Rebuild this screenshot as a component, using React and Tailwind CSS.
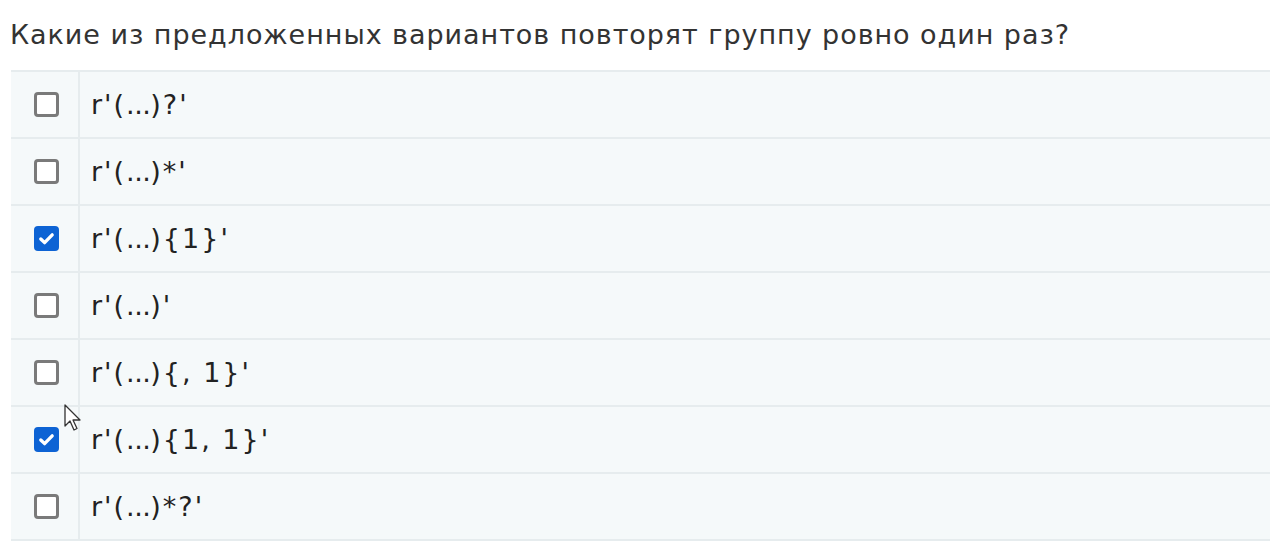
const options = [
  { label: "r'(...)?'", checked: false },
  { label: "r'(...)*'", checked: false },
  { label: "r'(...){1}'", checked: true },
  { label: "r'(...)'", checked: false },
  { label: "r'(...){, 1}'", checked: false },
  { label: "r'(...){1, 1}'", checked: true },
  { label: "r'(...)*?'", checked: false },
];

const Box = ({ checked }) =>
  checked ? (
    <span className="w-[25px] h-[25px] rounded-[4px] bg-[#0d63d4] flex items-center justify-center">
      <svg width="19" height="19" viewBox="0 0 16 16" fill="none">
        <path d="M3.2 8.4l3.2 3.1 6.4-6.6" stroke="white" strokeWidth="2.8" strokeLinecap="round" strokeLinejoin="round" />
      </svg>
    </span>
  ) : (
    <span className="w-[25px] h-[25px] rounded-[4px] bg-white border-[3px] border-[#7a7a7a]" />
  );

const Cursor = () => (
  <svg className="absolute left-[64px] top-[404px]" width="20" height="30" viewBox="0 0 20 30">
    <path d="M1 1v21l5-5 4 9 3-1.5-4-8.5h7z" fill="white" stroke="#333" strokeWidth="1.3" strokeLinejoin="round" />
  </svg>
);

// dots in the reference sit tight, the rest is spaced wider
const Label = ({ text }) => {
  const [head, tail] = text.split("...");
  return (
    <>
      {head}
      <span className="tracking-[-0.5px]">...</span>
      {tail}
    </>
  );
};

export default function App() {
  return (
    <div className="relative w-[1270px] h-[550px] bg-white overflow-hidden font-['DejaVu_Sans',sans-serif]">
      <div className="pl-[10px] pt-[21px] h-[70px] text-[27px] tracking-[0.95px] text-[#333] leading-none whitespace-nowrap">
        Какие из предложенных вариантов повторят группу ровно один раз?
      </div>
      <div className="ml-[11px] border-t-2 border-[#e6ecee] bg-[#f5f9fa]">
        {options.map((o, i) => (
          <div key={i} className="flex h-[67px] border-b-2 border-[#e6ecee]">
            <div className="w-[69px] border-r-2 border-[#e6ecee] flex items-center justify-center pl-[3px]">
              <Box checked={o.checked} />
            </div>
            <div className="flex items-center pl-[11px] text-[27px] tracking-[2px] text-[#222] leading-none whitespace-nowrap">
              <Label text={o.label} />
            </div>
          </div>
        ))}
      </div>
      <Cursor />
    </div>
  );
}
